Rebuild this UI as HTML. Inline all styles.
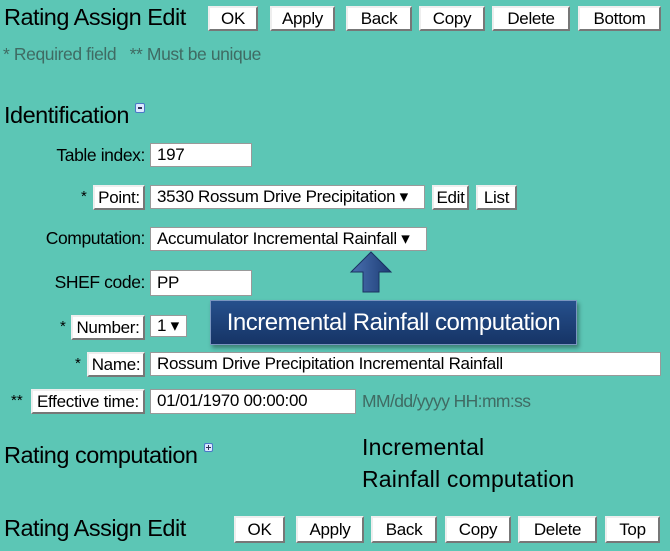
<!DOCTYPE html>
<html><head><meta charset="utf-8"><style>
*{box-sizing:border-box;margin:0;padding:0}
body{width:670px;height:551px;background:#5cc6b5;font-family:"Liberation Sans",Arial,sans-serif;position:relative;overflow:hidden;color:#000}
.a{position:absolute;white-space:nowrap}
.b{position:absolute;background:#fff;border:2px solid;border-color:#eee #777 #777 #eee;font-size:17px;text-align:center;line-height:21px;letter-spacing:-0.3px;white-space:nowrap}
.i{position:absolute;background:#fff;border:1px solid #999;font-size:17px;padding-left:6px;line-height:22px;letter-spacing:-0.3px;white-space:nowrap}
.l{position:absolute;font-size:17.5px;text-align:right;letter-spacing:-0.4px;white-space:nowrap}
.h{font-size:23.5px;letter-spacing:-0.5px}
.ic{position:absolute;width:10px;height:10px;background:#dde8ff;border:1px solid #4a78c8;border-radius:2px}
</style></head><body>
<div class="a h" style="left:4px;top:4px">Rating Assign Edit</div>
<div class="b" style="left:208px;top:6px;width:50px;height:25px">OK</div>
<div class="b" style="left:270px;top:6px;width:65px;height:25px">Apply</div>
<div class="b" style="left:346px;top:6px;width:66px;height:25px">Back</div>
<div class="b" style="left:419px;top:6px;width:66px;height:25px">Copy</div>
<div class="b" style="left:492px;top:6px;width:78px;height:25px">Delete</div>
<div class="b" style="left:578px;top:6px;width:83px;height:25px">Bottom</div>
<div class="a" style="left:3px;top:44px;font-size:17.5px;color:#3f6b63;letter-spacing:-0.4px">* Required field &nbsp;&nbsp;** Must be unique</div>
<div class="a h" style="left:4px;top:102px">Identification</div>
<div class="ic" style="left:135px;top:103px"><div style="position:absolute;left:2px;top:3px;width:4px;height:2px;background:#335"></div></div>

<div class="l" style="right:525px;top:145px">Table index:</div>
<div class="i" style="left:150px;top:143px;width:102px;height:24px">197</div>

<div class="a" style="left:81px;top:188px;font-size:15px">*</div>
<div class="b" style="left:93px;top:185px;width:52px;height:25px">Point:</div>
<div class="i" style="left:150px;top:185px;width:275px;height:24px">3530 Rossum Drive Precipitation ▾</div>
<div class="b" style="left:432px;top:185px;width:37px;height:25px">Edit</div>
<div class="b" style="left:476px;top:185px;width:41px;height:25px">List</div>

<div class="l" style="right:525px;top:228px">Computation:</div>
<div class="i" style="left:150px;top:227px;width:277px;height:24px">Accumulator Incremental Rainfall ▾</div>

<div class="l" style="right:525px;top:272px">SHEF code:</div>
<div class="i" style="left:150px;top:270px;width:102px;height:26px;line-height:24px">PP</div>

<div class="a" style="left:60px;top:318px;font-size:15px">*</div>
<div class="b" style="left:71px;top:315px;width:74px;height:25px">Number:</div>
<div class="i" style="left:150px;top:315px;width:37px;height:22px;line-height:20px">1 ▾</div>

<svg class="a" style="left:346px;top:250px" width="50" height="45" viewBox="0 0 50 45"><defs><linearGradient id="g" x1="0" x2="1"><stop offset="0" stop-color="#4a70b0"/><stop offset="1" stop-color="#1d3d75"/></linearGradient></defs><path d="M25 2 L45 22 L33 22 L33 42 L17 42 L17 22 L5 22 Z" fill="url(#g)" stroke="#1a3260" stroke-width="1"/></svg>
<div class="a" style="left:210px;top:300px;width:367px;height:45px;background:linear-gradient(#26508c,#163466);border:1px solid #7a96c0;box-shadow:2px 3px 4px rgba(0,0,0,.35);color:#fff;font-size:24px;line-height:43px;text-align:center;letter-spacing:-0.5px">Incremental Rainfall computation</div>

<div class="a" style="left:75px;top:355px;font-size:15px">*</div>
<div class="b" style="left:87px;top:352px;width:58px;height:25px">Name:</div>
<div class="i" style="left:150px;top:352px;width:511px;height:24px">Rossum Drive Precipitation Incremental Rainfall</div>

<div class="a" style="left:11px;top:392px;font-size:15px">**</div>
<div class="b" style="left:31px;top:389px;width:114px;height:25px">Effective time:</div>
<div class="i" style="left:150px;top:389px;width:206px;height:25px">01/01/1970 00:00:00</div>
<div class="a" style="left:362px;top:391px;font-size:17.5px;color:#3f6b63;letter-spacing:-0.6px">MM/dd/yyyy HH:mm:ss</div>

<div class="a h" style="left:4px;top:442px">Rating computation</div>
<div class="ic" style="left:204px;top:443px;width:9px;height:9px"><div style="position:absolute;left:1px;top:3px;width:5px;height:1px;background:#335"></div><div style="position:absolute;left:3px;top:1px;width:1px;height:5px;background:#335"></div></div>
<div class="a" style="left:362px;top:431px;font-size:23px;line-height:32px;letter-spacing:0.2px">Incremental<br>Rainfall computation</div>

<div class="a h" style="left:4px;top:515px">Rating Assign Edit</div>
<div class="b" style="left:234px;top:516px;width:51px;height:27px;line-height:23px">OK</div>
<div class="b" style="left:296px;top:516px;width:68px;height:27px;line-height:23px">Apply</div>
<div class="b" style="left:371px;top:516px;width:66px;height:27px;line-height:23px">Back</div>
<div class="b" style="left:445px;top:516px;width:66px;height:27px;line-height:23px">Copy</div>
<div class="b" style="left:518px;top:516px;width:79px;height:27px;line-height:23px">Delete</div>
<div class="b" style="left:605px;top:516px;width:55px;height:27px;line-height:23px">Top</div>
</body></html>
